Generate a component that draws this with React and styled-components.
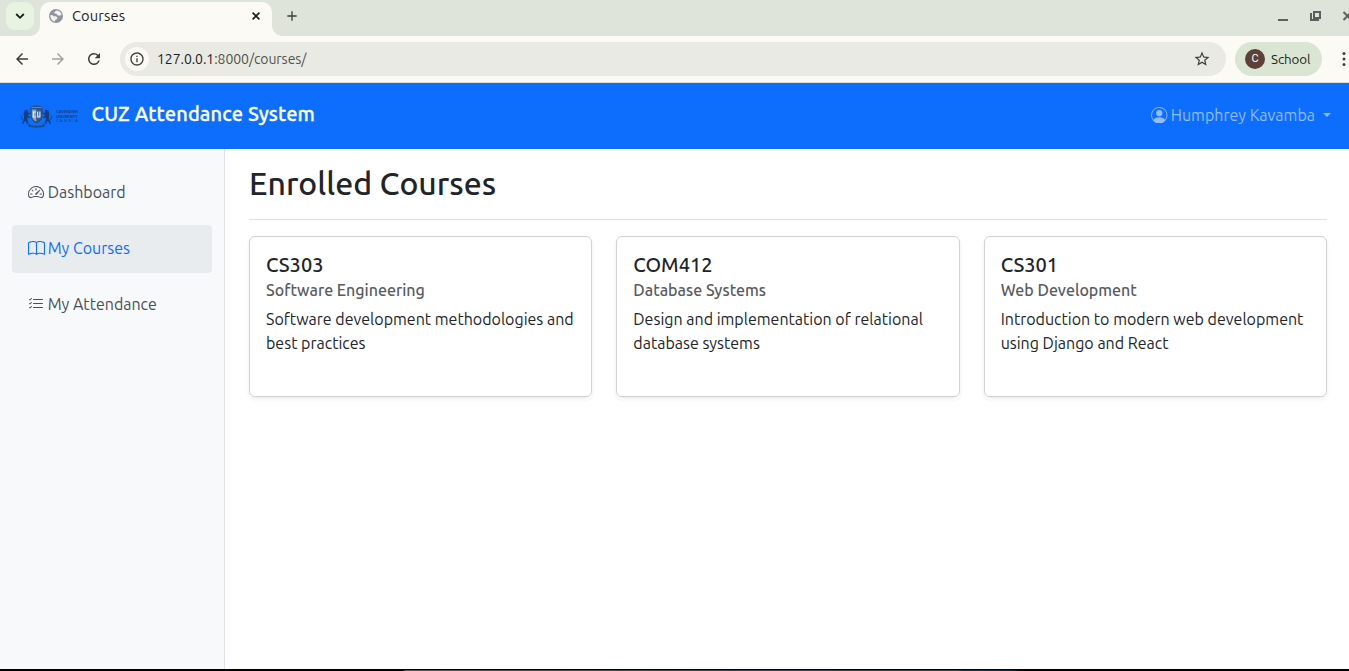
import React from 'react';
import styled, { createGlobalStyle } from 'styled-components';
import { BsPersonCircle, BsSpeedometer2, BsBook, BsListCheck } from 'react-icons/bs';
import { MdArrowBack, MdArrowForward, MdRefresh, MdStarBorder, MdAdd, MdInfoOutline } from 'react-icons/md';

const GlobalStyle = createGlobalStyle`
  *, *::before, *::after { box-sizing: border-box; }
  body {
    margin: 0;
    overflow: hidden;
    font-family: Ubuntu, "Noto Sans", "Open Sans", sans-serif;
    font-size: 16px;
    line-height: 24px;
    color: #212529;
    background: #fff;
  }
  svg { display: block; flex: none; }
`;

const Window = styled.div`
  display: flex;
  flex-direction: column;
  width: 100%;
  height: 671px;
  overflow: hidden;
`;

/* Browser chrome */
const TabStrip = styled.div`
  display: flex;
  height: 36px;
  flex: none;
  background: #dee4d9;
  color: #3b423a;
`;
const TabSearch = styled.div`
  display: flex;
  align-items: center;
  justify-content: center;
  width: 28px;
  height: 28px;
  margin: 2px 6px 0;
  border-radius: 9px;
  background: #e8f3e1;
  color: #1b1d1a;
`;
const Tab = styled.div`
  position: relative;
  display: flex;
  align-items: center;
  width: 232px;
  height: 34px;
  margin-top: 2px;
  padding: 0 12px 6px 9px;
  border-radius: 10px 10px 0 0;
  background: #fbfaf5;
  color: #1f211e;
  &::before, &::after {
    content: '';
    position: absolute;
    bottom: 0;
    width: 10px;
    height: 10px;
  }
  &::before {
    left: -10px;
    background: radial-gradient(circle at 0 0, transparent 9.5px, #fbfaf5 10px);
  }
  &::after {
    right: -10px;
    background: radial-gradient(circle at 100% 0, transparent 9.5px, #fbfaf5 10px);
  }
`;
const TabTitle = styled.span`
  flex: 1;
  margin-left: 9px;
  font-size: 14.67px;
  letter-spacing: 0.15px;
`;
const NewTab = styled.div`
  display: flex;
  margin: 8px 0 0 12px;
`;
const WindowButtons = styled.div`
  display: flex;
  align-items: flex-start;
  margin-left: auto;
`;
const Toolbar = styled.div`
  display: flex;
  align-items: center;
  height: 47px;
  flex: none;
  padding: 0 0 1px 13px;
  border-bottom: 1px solid #dddcd6;
  background: #fbfaf5;
  color: #3b423a;
`;
const ToolButton = styled.div`
  display: flex;
  width: 36px;
  color: ${p => (p.$muted ? '#a2a49e' : 'inherit')};
`;
const AddressBar = styled.div`
  display: flex;
  align-items: center;
  width: 1106px;
  height: 34px;
  margin-left: -1px;
  padding: 0 15px 0 5px;
  border-radius: 17px;
  background: #e9eae3;
`;
const SiteInfo = styled.div`
  display: flex;
  align-items: center;
  justify-content: center;
  width: 24px;
  height: 24px;
  border-radius: 50%;
  background: #fbfaf5;
`;
const Address = styled.span`
  flex: 1;
  margin-left: 8px;
  font-size: 14px;
  letter-spacing: -0.06px;
  color: #1f211e;
`;
const AddressPath = styled.span`color: #50534e;`;
const Profile = styled.div`
  display: flex;
  align-items: center;
  gap: 6px;
  width: 87px;
  height: 34px;
  margin-left: 9px;
  padding-left: 10px;
  border-radius: 17px;
  background: #dae6d3;
  color: #1d251b;
  font-size: 13.33px;
  letter-spacing: -0.1px;
`;
const ProfileName = styled.span`padding-top: 2px;`;
const Avatar = styled.span`
  display: flex;
  align-items: center;
  justify-content: center;
  width: 20px;
  height: 20px;
  border-radius: 50%;
  background: #5d4037;
  color: #fff;
  font: 11px Roboto, sans-serif;
`;
const MenuDots = styled.div`
  margin-left: 19px;
`;

/* Application */
const Navbar = styled.header`
  display: flex;
  align-items: center;
  justify-content: space-between;
  height: 66px;
  flex: none;
  padding: 0 18px 2px 20px;
  background: #0d6efd;
`;
const Brand = styled.div`
  display: flex;
  align-items: center;
  gap: 13.5px;
  color: #fff;
`;
const BrandLogo = styled.div`padding-top: 4px;`;
const BrandName = styled.span`
  font-size: 20px;
  font-weight: 500;
  letter-spacing: 0.15px;
  line-height: 30px;
  padding-bottom: 2px;
  -webkit-text-stroke: 0.3px currentColor;
`;
const User = styled.div`
  display: flex;
  align-items: center;
  gap: 3px;
  color: #92bdfe;
`;
const Caret = styled.span`
  margin-left: 5px;
  border-top: 4.5px solid;
  border-left: 4.5px solid transparent;
  border-right: 4.5px solid transparent;
`;
const Body = styled.div`
  display: flex;
  flex: 1;
  min-height: 0;
`;
const Sidebar = styled.nav`
  display: flex;
  flex-direction: column;
  gap: 8px;
  width: 225px;
  padding: 20px 12px 0;
  border-right: 1px solid #dee2e6;
  background: #f8f9fa;
`;
const NavItem = styled.div`
  display: flex;
  align-items: center;
  gap: ${p => (p.$active ? 3 : 4)}px;
  height: 48px;
  padding: 0 16px 2px 15.7px;
  border-radius: 4px;
  background: ${p => (p.$active ? '#e9ecef' : 'transparent')};
  color: ${p => (p.$active ? '#0d6efd' : '#495057')};
`;
const Main = styled.main`
  flex: 1;
  padding: 16px 22px 0 24px;
`;
const Title = styled.h1`
  margin: 0;
  height: 55px;
  padding-bottom: 16px;
  border-bottom: 1px solid #dee2e6;
  font-size: 32px;
  font-weight: 500;
  line-height: 36px;
`;
const Cards = styled.div`
  display: grid;
  grid-template-columns: repeat(3, 1fr);
  gap: 24px;
  margin-top: 16px;
`;
const Card = styled.article`
  height: 161px;
  padding: 16px;
  border: 1px solid #cfd1d3;
  border-radius: 6px;
  box-shadow: 0 2px 4px rgba(0, 0, 0, 0.075);
`;
const Code = styled.h2`
  margin: 0 0 4px;
  font-size: 20px;
  font-weight: 500;
  line-height: 24px;
`;
const Subject = styled.h3`
  margin: 0 0 7px;
  font-size: 16px;
  font-weight: 500;
  line-height: 19.2px;
  color: #595c5f;
`;
const Description = styled.p`
  margin: 0;
`;
const Dock = styled.footer`
  height: 2px;
  flex: none;
  border-top: 1px solid #000;
  background: linear-gradient(90deg, #000 403px, #555 405px, #3a4348 700px, #34424c 958px, #04354a 962px, #042f3c 1010px, #000 1022px);
`;

const courses = [
  { code: 'CS303', subject: 'Software Engineering', description: 'Software development methodologies and best practices' },
  { code: 'COM412', subject: 'Database Systems', description: 'Design and implementation of relational database systems' },
  { code: 'CS301', subject: 'Web Development', description: 'Introduction to modern web development using Django and React' },
];

const Globe = () => (
  <svg width="14" height="14" viewBox="0 0 14 14">
    <circle cx="7" cy="7" r="7" fill="#8f959c" />
    <path d="M7.2 1.5 5.4 3.2v1.4l2.3.2.9 1.7H11l1.7-.8A5.8 5.8 0 0 0 7.2 1.5zM1.4 6.2c-.3 3 1.7 5.8 4.7 6.4V11l2-.9.3-1.6-1.6-1.2H4.7L3.4 6z" fill="#f2f3f1" />
  </svg>
);

const Chevron = () => (
  <svg width="10" height="8" viewBox="0 0 10 8" fill="none" stroke="currentColor" strokeWidth="1.8">
    <path d="M1.2 2 5 5.8 8.8 2" />
  </svg>
);

const Cross = () => (
  <svg width="8" height="8" viewBox="0 0 8 8" fill="none" stroke="currentColor" strokeWidth="1.7">
    <path d="M.6.6l6.8 6.8M7.4.6.6 7.4" />
  </svg>
);

const Dots = () => (
  <svg width="6" height="16" viewBox="0 0 6 16" fill="currentColor">
    <circle cx="3" cy="2.5" r="1.5" /><circle cx="3" cy="8" r="1.5" /><circle cx="3" cy="13.5" r="1.5" />
  </svg>
);

/* One heraldic supporter; mirrored for the right-hand side */
const Lion = () => (
  <>
    <path d="M4.6 5.4 6.6 4.6 8.2 5.6 7.8 7 8.6 8 10.6 7.4 11 8.2 8.4 9.6 8.2 11 10.4 12.2 10 13 7.6 12.6 7.2 14.6 8.4 17 8.1 18.8 6.4 18.8 6.6 17.4 5.6 16 4 17 3.8 18.8 2.2 18.8 2.6 16.4 4.2 14.4 3.9 11.5 3.6 8.8z" />
    <path d="M3.9 15.2C.9 15.2 2.5 11.8.8 10.4" fill="none" stroke="#173d7c" strokeWidth=".9" />
  </>
);
const Logo = () => (
  <svg width="58" height="24" viewBox="0 0 58 24" fill="#173d7c">
    <Lion />
    <g transform="translate(33 0) scale(-1 1)"><Lion /></g>
    <path d="M10.5 2Q16.5-.8 22.5 2v9.2Q21.5 16.5 16.5 18.5 11.5 16.5 10.5 11.2z" fill="#2a4c80" />
    <path d="M11.8 4.4h4.7v12.4Q12.3 15 11.8 11z" fill="#86a2c6" />
    <path d="M16.5 4.4h4.7V11q-.5 4.2-4.7 5.8z" fill="#365b93" />
    <path d="M15.8 7h-2.3v5h2.3M17.7 6.5V12h2.2V6.5" fill="none" stroke="#e6edf7" strokeWidth="1.1" />
    <path d="M11.5 2.6h10" stroke="#8496a8" strokeWidth=".8" />
    <path d="M8 19.2q8.5 2.2 17 0l-1 2.6q-7.5 1.3-15 0z" />
    <path d="M10 20.8h13" stroke="#4a72ad" strokeWidth=".8" />
    <g fontFamily="Liberation Sans, Arial, sans-serif" fontSize="4" fontWeight="700" fill="#1a4186">
      <text x="36" y="8.3" textLength="22">CAVENDISH</text>
      <text x="36" y="12.8" textLength="22">UNIVERSITY</text>
      <text x="36" y="17.3" textLength="22" fontWeight="400">ZAMBIA</text>
    </g>
  </svg>
);

const WindowIcons = () => (
  <svg width="72" height="36" viewBox="0 0 72 36" fill="none" stroke="#5c605c" strokeWidth="2">
    <path d="M1 20h10M37 12h6v6h-6zM34 13v7h8" />
    <path d="M66.5 12l8 8M74.5 12l-8 8" />
  </svg>
);

export default function App() {
  return (
    <>
      <GlobalStyle />
      <Window>
        <TabStrip>
          <TabSearch><Chevron /></TabSearch>
          <Tab>
            <Globe />
            <TabTitle>Courses</TabTitle>
            <Cross />
          </Tab>
          <NewTab><MdAdd size={16} /></NewTab>
          <WindowButtons><WindowIcons /></WindowButtons>
        </TabStrip>
        <Toolbar>
          <ToolButton><MdArrowBack size={18} /></ToolButton>
          <ToolButton $muted><MdArrowForward size={18} /></ToolButton>
          <ToolButton><MdRefresh size={18} /></ToolButton>
          <AddressBar>
            <SiteInfo><MdInfoOutline size={16} /></SiteInfo>
            <Address>127.0.0.1<AddressPath>:8000/courses/</AddressPath></Address>
            <MdStarBorder size={18} />
          </AddressBar>
          <Profile><Avatar>C</Avatar><ProfileName>School</ProfileName></Profile>
          <MenuDots><Dots /></MenuDots>
        </Toolbar>
        <Navbar>
          <Brand><BrandLogo><Logo /></BrandLogo><BrandName>CUZ Attendance System</BrandName></Brand>
          <User><BsPersonCircle size={16.5} />Humphrey Kavamba<Caret /></User>
        </Navbar>
        <Body>
          <Sidebar>
            <NavItem><BsSpeedometer2 size={16} />Dashboard</NavItem>
            <NavItem $active><BsBook size={17} />My Courses</NavItem>
            <NavItem><BsListCheck size={16} />My Attendance</NavItem>
          </Sidebar>
          <Main>
            <Title>Enrolled Courses</Title>
            <Cards>
              {courses.map(course => (
                <Card key={course.code}>
                  <Code>{course.code}</Code>
                  <Subject>{course.subject}</Subject>
                  <Description>{course.description}</Description>
                </Card>
              ))}
            </Cards>
          </Main>
        </Body>
        <Dock />
      </Window>
    </>
  );
}
